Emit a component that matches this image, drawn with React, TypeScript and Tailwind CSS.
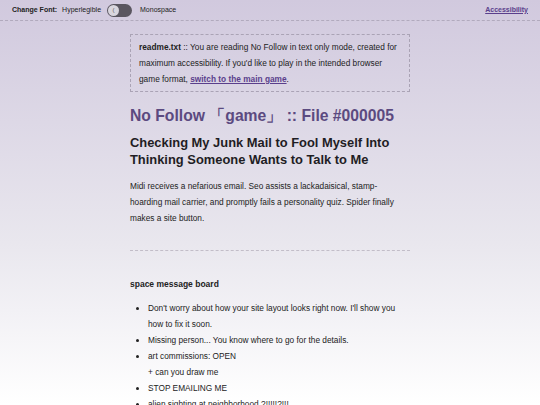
import React from 'react'

const font = { fontFamily: '"Liberation Sans", Arial, sans-serif' }

function Toggle() {
  return (
    <div className="w-[25px] h-[13px] rounded-full bg-[#5a5660] flex items-center px-[1px]">
      <div className="w-[11px] h-[11px] rounded-full bg-[#d9d6de] flex items-center justify-center text-[6px] leading-none text-[#555]">
        (
      </div>
    </div>
  )
}

export default function App() {
  const items = [
    "Don't worry about how your site layout looks right now. I'll show you how to fix it soon.",
    'Missing person... You know where to go for the details.',
  ]
  return (
    <div
      className="w-[540px] h-[405px] overflow-hidden bg-gradient-to-b from-[#d1c9de] via-[#e9e7ee] via-[60%] to-[#ffffff] text-[#222]"
      style={font}
    >
      <div className="h-[21px] flex items-center px-3 text-[7px] border-b border-dashed border-[#b1aabd]">
        <span className="font-bold">Change Font:</span>
        <span className="ml-[5px]">Hyperlegible</span>
        <span className="ml-[6px]">
          <Toggle />
        </span>
        <span className="ml-[8px]">Monospace</span>
        <a className="ml-auto font-bold underline text-[#5a3f8c]">Accessibility</a>
      </div>

      <div className="w-[280px] mx-auto pt-[13px]">
        <div className="border border-dashed border-[#aaa3b5] px-2 py-[4px] text-[8.3px] leading-[16px]">
          <span className="font-bold">readme.txt</span> :: You are reading No Follow in text only mode, created for
          maximum accessibility. If you'd like to play in the intended browser game format,{' '}
          <a className="font-bold underline text-[#5a3f8c]">switch to the main game</a>.
        </div>

        <h1 className="mt-[13px] text-[15.7px] font-bold text-[#5b4a80] leading-[22px]">
          No Follow 「game」 :: File #000005
        </h1>
        <h2 className="mt-[7px] text-[12.9px] font-bold leading-[17px] text-[#1f1d24]">
          Checking My Junk Mail to Fool Myself Into Thinking Someone Wants to Talk to Me
        </h2>
        <p className="mt-[10px] text-[8.3px] leading-[16px]">
          Midi receives a nefarious email. Seo assists a lackadaisical, stamp-
          <br />
          hoarding mail carrier, and promptly fails a personality quiz. Spider finally makes a site button.
        </p>

        <div className="mt-[24px] border-t border-dashed border-[#c2bdc8]" />

        <h3 className="mt-[27px] text-[8.5px] font-bold leading-[12px]">space message board</h3>
        <ul className="mt-[10px] list-disc pl-[18px] text-[8.3px] leading-[16px]">
          {items.map((t) => (
            <li key={t}>{t}</li>
          ))}
          <li>
            art commissions: OPEN
            <div>+ can you draw me</div>
          </li>
          <li>STOP EMAILING ME</li>
          <li>alien sighting at neighborhood ?!!!!!?!!!</li>
        </ul>
      </div>
    </div>
  )
}
